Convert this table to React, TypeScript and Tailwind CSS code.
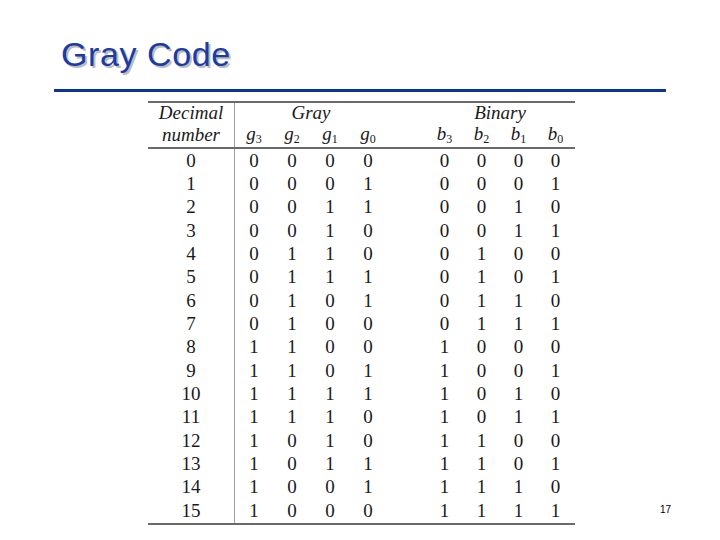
import React from "react";

const gray = ["0000","0001","0011","0010","0110","0111","0101","0100","1100","1101","1111","1110","1010","1011","1001","1000"];
const bin = (n: number) => n.toString(2).padStart(4, "0");

const grid = "grid grid-cols-[87px_38px_38px_38px_38px_39px_37px_37px_37px_37px] items-center";

function Sub({ v, i }: { v: string; i: string }) {
  return (
    <span className="italic relative -top-[2px]">
      {v}
      <span className="not-italic text-[12px] leading-none relative top-[3px]">{i}</span>
    </span>
  );
}

export default function App() {
  return (
    <div className="w-[720px] h-[540px] bg-white relative overflow-hidden">
      <div className="pt-[34px] pl-[61px] h-[89px]">
        <h1 className="text-[34px] leading-[40px] tracking-[0.6px] text-[#1b3ca6] [font-family:'Liberation_Sans',Arial,sans-serif] [text-shadow:2px_2px_0_#bdbdbd]">
          Gray Code
        </h1>
      </div>
      <div className="ml-[54px] w-[612px] h-[3px] bg-[#0c3497]" />
      <div className="ml-[148px] mt-[9px] w-[427px] border-t-2 border-b-2 border-[#6a6a6a] text-[19px] leading-[20px] text-[#1a1a1a] [font-family:'Liberation_Serif','Times_New_Roman',serif]">
        <div className={`${grid} h-[21px]`}>
          <div className="h-full flex items-center justify-center border-r border-[#a0a0a0] italic"><span className="relative -top-[1px]">Decimal</span></div>
          <div className="col-span-4 text-center italic"><span className="relative -top-[1px]">Gray</span></div>
          <div />
          <div className="col-span-4 text-center italic"><span className="relative -top-[1px]">Binary</span></div>
        </div>
        <div className={`${grid} h-[25px] border-b-2 border-[#6a6a6a]`}>
          <div className="h-full flex items-center justify-center border-r border-[#a0a0a0] italic"><span className="relative -top-[1px]">number</span></div>
          <div className="text-center"><Sub v="g" i="3" /></div>
          <div className="text-center"><Sub v="g" i="2" /></div>
          <div className="text-center"><Sub v="g" i="1" /></div>
          <div className="text-center"><Sub v="g" i="0" /></div>
          <div />
          <div className="text-center"><Sub v="b" i="3" /></div>
          <div className="text-center"><Sub v="b" i="2" /></div>
          <div className="text-center"><Sub v="b" i="1" /></div>
          <div className="text-center"><Sub v="b" i="0" /></div>
        </div>
        {gray.map((g, n) => (
          <div key={n} className={`${grid} h-[23.35px]`}>
            <div className="h-full flex items-center justify-center border-r border-[#a0a0a0]">{n}</div>
            {g.split("").map((c, i) => (
              <div key={"g" + i} className="text-center">{c}</div>
            ))}
            <div />
            {bin(n).split("").map((c, i) => (
              <div key={"b" + i} className="text-center">{c}</div>
            ))}
          </div>
        ))}
      </div>
      <div className="absolute left-[660px] top-[502px] text-[10px] text-black [font-family:'Liberation_Sans',Arial,sans-serif]">17</div>
    </div>
  );
}
